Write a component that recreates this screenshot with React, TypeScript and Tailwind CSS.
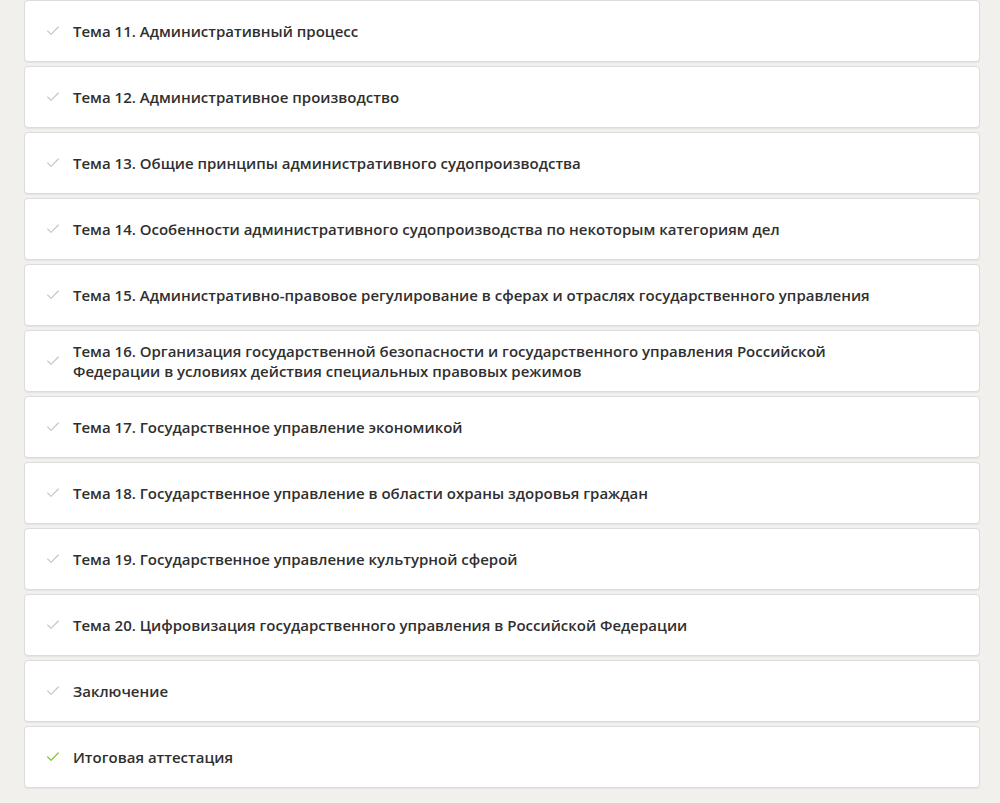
import { Check } from 'lucide-react';

const topics = [
  { title: 'Тема 11. Административный процесс' },
  { title: 'Тема 12. Административное производство' },
  { title: 'Тема 13. Общие принципы административного судопроизводства' },
  { title: 'Тема 14. Особенности административного судопроизводства по некоторым категориям дел' },
  { title: 'Тема 15. Административно-правовое регулирование в сферах и отраслях государственного управления' },
  {
    title:
      'Тема 16. Организация государственной безопасности и государственного управления Российской Федерации в условиях действия специальных правовых режимов',
  },
  { title: 'Тема 17. Государственное управление экономикой' },
  { title: 'Тема 18. Государственное управление в области охраны здоровья граждан' },
  { title: 'Тема 19. Государственное управление культурной сферой' },
  { title: 'Тема 20. Цифровизация государственного управления в Российской Федерации' },
  { title: 'Заключение' },
  { title: 'Итоговая аттестация', done: true },
];

function TopicRow({ title, done }: { title: string; done?: boolean }) {
  return (
    <div className="flex h-[62px] items-center rounded-[4px] border border-[#dcdcda] bg-white pl-[20px] pr-[88px] shadow-[0_1px_0_#e4e4e2]">
      <Check
        className={done ? 'h-[16px] w-[16px] shrink-0 text-[#8cc63f]' : 'h-[16px] w-[16px] shrink-0 text-[#c4c4c4]'}
        strokeWidth={done ? 2 : 1.6}
      />
      <span className="ml-[12px] text-[15px] font-semibold leading-[20px] text-[#2f2f2f]">{title}</span>
    </div>
  );
}

export default function App() {
  return (
    <div
      className="min-h-[803px] bg-[#f1f0ed] pl-[24px] pr-[20px]"
      style={{ fontFamily: '"Open Sans", "Noto Sans", sans-serif' }}
    >
      <div className="flex flex-col gap-[4px]">
        {topics.map((t) => (
          <TopicRow key={t.title} title={t.title} done={t.done} />
        ))}
      </div>
    </div>
  );
}
